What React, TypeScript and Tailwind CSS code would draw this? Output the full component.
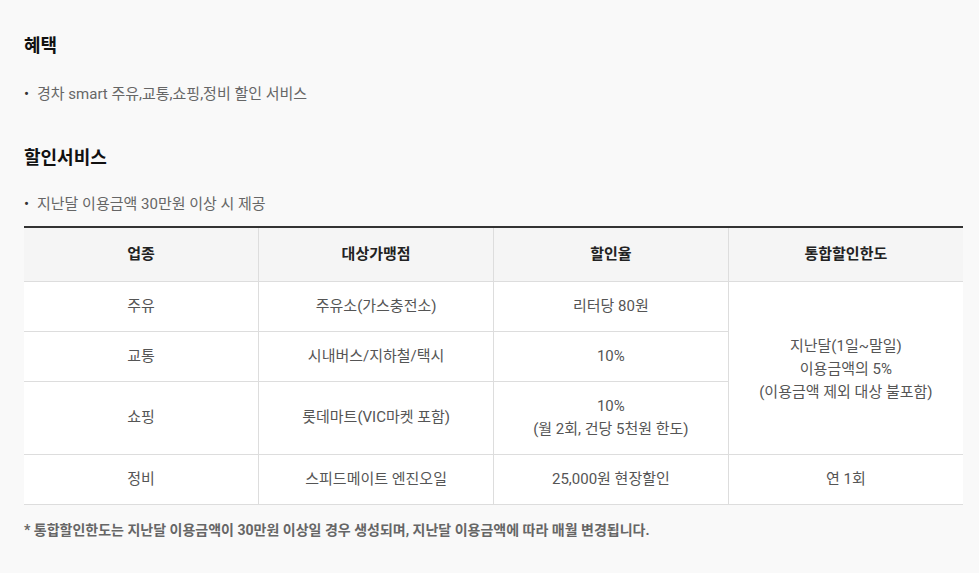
import React from "react";

const font = { fontFamily: "Roboto, 'Noto Sans CJK KR', sans-serif" };

const rows = [
  { type: "주유", store: "주유소(가스충전소)", rate: ["리터당 80원"] },
  { type: "교통", store: "시내버스/지하철/택시", rate: ["10%"] },
  { type: "쇼핑", store: "롯데마트(VIC마켓 포함)", rate: ["10%", "(월 2회, 건당 5천원 한도)"] },
];

export default function App() {
  return (
    <div className="min-h-[573px] bg-[#f9f9f9] pl-6 pr-4 pt-[33px] text-[#555]" style={font}>
      <h2 className="text-[18px] leading-[26px] font-bold text-[#111]">혜택</h2>
      <ul className="mt-[25px]">
        <li className="flex text-[15px] leading-5 text-[#666]">
          <span className="w-[13px] text-[#333]">•</span>
          경차 smart 주유,교통,쇼핑,정비 할인 서비스
        </li>
      </ul>

      <h2 className="mt-[41px] text-[18px] leading-[26px] font-bold text-[#111]">할인서비스</h2>
      <ul className="mt-[23px]">
        <li className="flex text-[15px] leading-5 text-[#666]">
          <span className="w-[13px] text-[#333]">•</span>
          지난달 이용금액 30만원 이상 시 제공
        </li>
      </ul>

      <table className="mt-[12px] w-full table-fixed border-collapse border-t-2 border-[#333] text-center text-[15px] leading-[23px]">
        <thead>
          <tr className="h-[54px] bg-[#f5f5f5] font-bold text-[#222]">
            <th className="border-b border-[#ddd]">업종</th>
            <th className="border-b border-l border-[#ddd]">대상가맹점</th>
            <th className="border-b border-l border-[#ddd]">할인율</th>
            <th className="border-b border-l border-[#ddd]">통합할인한도</th>
          </tr>
        </thead>
        <tbody className="bg-white">
          {rows.map((r, i) => (
            <tr key={r.type} className={i === 2 ? "h-[73px]" : "h-[50px]"}>
              <td className="border-b border-[#ddd]">{r.type}</td>
              <td className="border-b border-l border-[#ddd]">{r.store}</td>
              <td className="border-b border-l border-[#ddd]">
                {r.rate.map((t) => (
                  <div key={t}>{t}</div>
                ))}
              </td>
              {i === 0 && (
                <td rowSpan={3} className="border-b border-l border-[#ddd] pt-[4px]">
                  <div>지난달(1일~말일)</div>
                  <div>이용금액의 5%</div>
                  <div>(이용금액 제외 대상 불포함)</div>
                </td>
              )}
            </tr>
          ))}
          <tr className="h-[50px]">
            <td className="border-b border-[#ddd]">정비</td>
            <td className="border-b border-l border-[#ddd]">스피드메이트 엔진오일</td>
            <td className="border-b border-l border-[#ddd]">25,000원 현장할인</td>
            <td className="border-b border-l border-[#ddd]">연 1회</td>
          </tr>
        </tbody>
      </table>

      <p className="mt-[15px] text-[14px] leading-5 font-bold text-[#666]">
        * 통합할인한도는 지난달 이용금액이 30만원 이상일 경우 생성되며, 지난달 이용금액에 따라 매월 변경됩니다.
      </p>
    </div>
  );
}
